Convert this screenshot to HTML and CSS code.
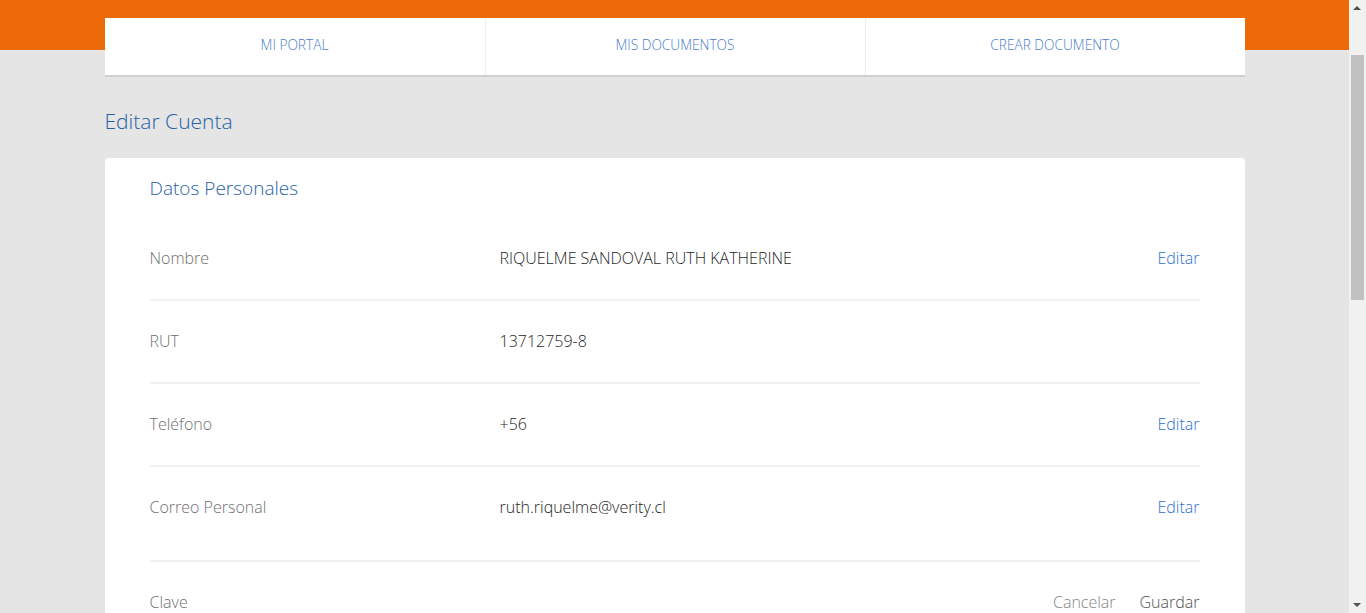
FILE: index.html
```html
<!DOCTYPE html>
<html lang="es">
<head>
<meta charset="utf-8">
<title>Editar Cuenta</title>
<link rel="stylesheet" href="styles.css">
</head>
<body>
<div class="page">
  <header class="topbar"></header>
  <div class="container">
    <nav class="tabs">
      <a class="tab" href="#">MI PORTAL</a>
      <a class="tab" href="#">MIS DOCUMENTOS</a>
      <a class="tab" href="#">CREAR DOCUMENTO</a>
    </nav>
    <h1 class="page-title">Editar Cuenta</h1>
    <section class="card">
      <h2 class="card-title">Datos Personales</h2>
      <div class="row">
        <span class="label">Nombre</span>
        <span class="value">RIQUELME SANDOVAL RUTH KATHERINE</span>
        <span class="actions"><a class="link" href="#">Editar</a></span>
      </div>
      <div class="row">
        <span class="label">RUT</span>
        <span class="value">13712759-8</span>
        <span class="actions"></span>
      </div>
      <div class="row">
        <span class="label">Teléfono</span>
        <span class="value">+56</span>
        <span class="actions"><a class="link" href="#">Editar</a></span>
      </div>
      <div class="row row-tall">
        <span class="label">Correo Personal</span>
        <span class="value">ruth.riquelme@verity.cl</span>
        <span class="actions"><a class="link" href="#">Editar</a></span>
      </div>
      <div class="row row-last">
        <span class="label">Clave</span>
        <span class="value"></span>
        <span class="actions"><a class="muted" href="#">Cancelar</a><a class="dark" href="#">Guardar</a></span>
      </div>
    </section>
  </div>
</div>
<div class="scrollbar">
  <span class="arrow arrow-up"></span>
  <span class="thumb"></span>
  <span class="arrow arrow-down"></span>
</div>
</body>
</html>
```
FILE: styles.css
```css
html, body {
  margin: 0;
  padding: 0;
  overflow: hidden;
}
body {
  background: #e5e5e5;
  font-family: "Open Sans", "Noto Sans", sans-serif;
  font-weight: 300;
  height: 613px;
}
a { text-decoration: none; }
.page {
  width: 1349px;
}
.topbar {
  height: 50px;
  background: #ec6a08;
}
.container {
  width: 1140px;
  margin: -32px auto 0;
}
.tabs {
  display: grid;
  grid-template-columns: repeat(3, 1fr);
  background: #fff;
  height: 57px;
  border-bottom: 2px solid #d0d0d0;
}
.tab {
  display: flex;
  align-items: center;
  justify-content: center;
  padding-bottom: 4px;
  color: #4a7cc9;
  font-size: 13.7px;
  font-weight: 300;
  border-left: 1px solid #eeeeee;
}
.tab:first-child { border-left: none; }
.page-title {
  margin: 30px 0 23px;
  font-size: 21px;
  line-height: 28px;
  font-weight: 300;
  color: #1f62a6;
}
.card {
  background: #fff;
  border-radius: 4px;
  padding: 18px 45px 0;
  height: 600px;
}
.card-title {
  margin: 0 0 18px;
  font-size: 19px;
  line-height: 24px;
  font-weight: 300;
  color: #1f62a6;
}
.row {
  display: grid;
  grid-template-columns: 350px 1fr auto;
  align-items: center;
  height: 79px;
  padding-bottom: 2px;
  line-height: 22px;
  border-bottom: 2px solid #f0f0f0;
  font-size: 16px;
}
.row-tall {
  align-items: start;
  padding-top: 29px;
  padding-bottom: 0;
  height: 64px;
}
.row-last { border-bottom: none; }
.label { color: #6f6f6f; }
.value { color: #1e1e1e; }
.actions {
  display: flex;
  gap: 24px;
}
.link { color: #2f70c8; }
.muted { color: #858585; }
.dark { color: #4e4e4e; }
.scrollbar {
  position: fixed;
  top: 0;
  right: 0;
  width: 17px;
  height: 613px;
  background: #f1f1f1;
}
.thumb {
  position: absolute;
  left: 2px;
  top: 55px;
  width: 13px;
  height: 245px;
  background: #c1c1c1;
}
.arrow {
  position: absolute;
  left: 4px;
  width: 0;
  height: 0;
  border-left: 4px solid transparent;
  border-right: 4px solid transparent;
}
.arrow-up {
  top: 6px;
  border-bottom: 4px solid #505050;
}
.arrow-down {
  bottom: 6px;
  border-top: 4px solid #505050;
}
```
